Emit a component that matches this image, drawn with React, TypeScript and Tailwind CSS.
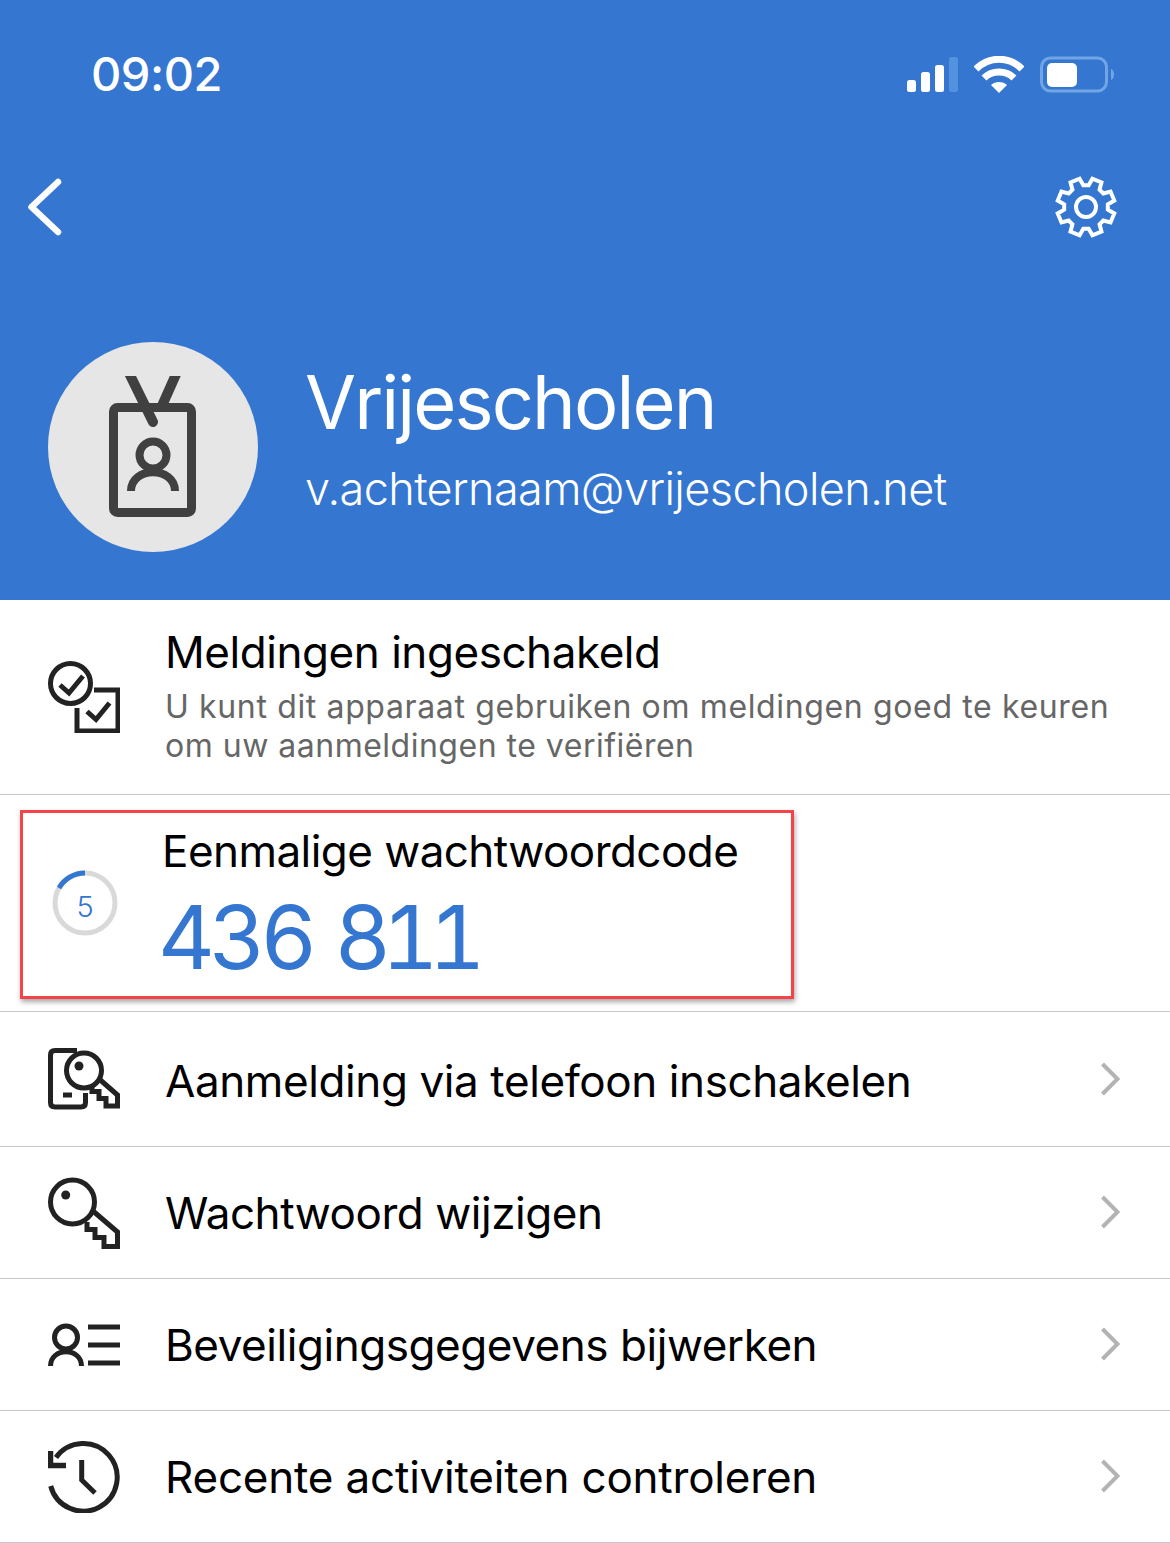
import React from "react";

const font = { fontFamily: "Inter, Roboto, 'Liberation Sans', sans-serif" };

function gearPath(cx: number, cy: number, R: number, r: number) {
  const pts: string[] = [];
  const n = 8;
  for (let i = 0; i < n; i++) {
    const a = (Math.PI * 2 * i) / n + Math.PI / 8 - Math.PI / 2;
    const w1 = 0.17;
    const w2 = 0.27;
    const list: [number, number][] = [
      [r, a - w2],
      [R, a - w1],
      [R, a + w1],
      [r, a + w2],
    ];
    for (const [rad, ang] of list) {
      pts.push(`${(cx + rad * Math.cos(ang)).toFixed(2)} ${(cy + rad * Math.sin(ang)).toFixed(2)}`);
    }
  }
  return "M" + pts.join("L") + "Z";
}

function Chevron() {
  return (
    <svg width="20" height="34" viewBox="0 0 20 34" fill="none" className="shrink-0">
      <path d="M2.5 2 L17.5 17 L2.5 32" stroke="#b3b3b3" strokeWidth="4" />
    </svg>
  );
}

function NavRow({ icon, label, h, text, chev }: { icon: React.ReactNode; label: string; h: string; text: string; chev: string }) {
  return (
    <div className={`flex items-center border-b border-[#c8c8c8] pl-[48px] pr-[50px] ${h}`}>
      <div className="w-[117px] shrink-0 flex items-center">{icon}</div>
      <div className={`flex-1 text-[44px] leading-[54px] text-black ${text}`}>{label}</div>
      <div className={chev}><Chevron /></div>
    </div>
  );
}

export default function App() {
  return (
    <div className="w-[1170px] h-[1543px] bg-white overflow-hidden" style={font}>
      <header className="h-[600px] bg-[#3476d0] text-white flex flex-col">
        <div className="flex items-center justify-between pl-[91px] pr-[54px] pt-[46px] h-[104px]">
          <span className="text-[47px] leading-[56px] font-medium tracking-[-0.5px] -mt-[2px]">09:02</span>
          <div className="flex items-center gap-[16px]">
            <svg width="52" height="36" viewBox="0 0 52 36">
              <rect x="1" y="23" width="9" height="12" rx="2.5" fill="#fff" />
              <rect x="15" y="15" width="9" height="20" rx="2.5" fill="#fff" />
              <rect x="29" y="8" width="9" height="27" rx="2.5" fill="#fff" />
              <rect x="43" y="0" width="9" height="35" rx="2.5" fill="#5393dd" />
            </svg>
            <svg width="50" height="38" viewBox="0 0 50 38">
              <path d="M2 13 C15 0 35 0 48 13" stroke="#fff" strokeWidth="7" fill="none" />
              <path d="M10 22 C18 14 32 14 40 22" stroke="#fff" strokeWidth="7" fill="none" />
              <path d="M17 29 C21 25 29 25 33 29 L25 37 Z" fill="#fff" />
            </svg>
            <svg width="76" height="38" viewBox="0 0 76 38">
              <rect x="1.5" y="2" width="65" height="33" rx="9" fill="none" stroke="#72a5e3" strokeWidth="3" />
              <rect x="7" y="7" width="30" height="24" rx="5" fill="#fff" />
              <path d="M71 13 C75 14 75 23 71 24 Z" fill="#72a5e3" />
            </svg>
          </div>
        </div>
        <div className="flex items-center justify-between pl-[28px] pr-[53px] mt-[70px] h-[66px]">
          <svg width="34" height="58" viewBox="0 0 34 58" fill="none">
            <path d="M30 4 L3.5 29 L30 54" stroke="#fff" strokeWidth="6.5" strokeLinecap="round" strokeLinejoin="round" />
          </svg>
          <svg width="62" height="62" viewBox="0 0 62 62" fill="none" stroke="#fff" strokeWidth="4">
            <path d={gearPath(31, 31, 29, 22)} strokeLinejoin="miter" />
            <circle cx="31" cy="31" r="10" />
          </svg>
        </div>
        <div className="flex items-center pl-[48px] mt-[102px]">
          <div className="w-[210px] h-[210px] rounded-full bg-[#e6e6e6] flex items-center justify-center shrink-0">
            <svg width="92" height="142" viewBox="0 0 92 142" fill="none" stroke="#404040" strokeWidth="8">
              <rect x="6.5" y="31.5" width="78" height="105" rx="4" strokeWidth="9" />
              <path d="M21.5 -4 L46 46" strokeLinecap="round" strokeWidth="10" />
              <path d="M70 -4 L54 32" strokeWidth="10" />
              <circle cx="46" cy="79" r="13.5" />
              <path d="M24 115 C24 90 68 90 68 115" />
            </svg>
          </div>
          <div className="ml-[47px] -mt-[21px]">
            <div className="text-[74px] leading-[90px] font-normal tracking-[-1.9px]">Vrijescholen</div>
            <div className="text-[45px] leading-[54px] mt-[15px] font-light tracking-[-0.6px]">v.achternaam@vrijescholen.net</div>
          </div>
        </div>
      </header>

      <div className="flex h-[195px] border-b border-[#c8c8c8] pl-[48px]">
        <div className="w-[117px] shrink-0 pt-[61px]">
          <svg width="72" height="72" viewBox="0 0 72 72" fill="none" stroke="#222" strokeWidth="5">
            <path d="M29 47 V70 H70 V29 H46" />
            <circle cx="22.5" cy="22.5" r="20" />
            <path d="M12 24 L21 32 L35 15" />
            <path d="M39 50.5 L48 58.5 L61.5 42" />
          </svg>
        </div>
        <div className="pt-[25px]">
          <div className="text-[44px] leading-[54px] text-black tracking-[-0.45px]">Meldingen ingeschakeld</div>
          <div className="text-[32px] leading-[39px] text-[#666] mt-[8px]">
            <div className="tracking-[0.64px]">U kunt dit apparaat gebruiken om meldingen goed te keuren</div>
            <div className="tracking-[0.5px]">om uw aanmeldingen te verifiëren</div>
          </div>
        </div>
      </div>

      <div className="h-[217px] border-b border-[#c8c8c8] pl-[20px] pt-[15px]">
        <div className="w-[774px] h-[189px] border-[3px] border-[#f4444a] shadow-[1px_3px_5px_rgba(0,0,0,0.35)] flex">
          <div className="w-[139px] shrink-0 pl-[29px] pt-[57px]">
            <div className="relative w-[66px] h-[66px]">
              <svg width="66" height="66" viewBox="0 0 66 66" fill="none" strokeWidth="5">
                <circle cx="33" cy="33" r="30" stroke="#d9d9d9" />
                <path d="M33 3 A30 30 0 0 0 7 18" stroke="#3476d0" />
              </svg>
              <span className="absolute inset-0 flex items-center justify-center text-[29px] font-light text-[#3476d0] pt-[7px]">5</span>
            </div>
          </div>
          <div>
            <div className="text-[44px] leading-[54px] text-black mt-[11px] tracking-[-0.55px]">Eenmalige wachtwoordcode</div>
            <div className="text-[88px] leading-[100px] font-normal tabular-nums text-[#3476d0] mt-[9px] -ml-[4px] tracking-[-5.5px]">
              <span className="tracking-[-6px]">436</span> <span className="ml-[5px] tracking-[-10px]">811</span>
            </div>
          </div>
        </div>
      </div>

      <NavRow
        h="h-[135px]"
        label="Aanmelding via telefoon inschakelen"
        text="pt-[4px] tracking-[-0.4px]"
        chev=""
        icon={
          <svg width="72" height="62" viewBox="0 0 72 62" fill="none" stroke="#222" strokeWidth="5">
            <path d="M29 2.5 H7 Q2.5 2.5 2.5 7 V54.5 Q2.5 59 7 59 H33 Q37.5 59 37.5 54.5 V45" />
            <path d="M15 47 H24" />
            <circle cx="36" cy="22.5" r="17.5" />
            <circle cx="31" cy="18" r="4.5" fill="#222" stroke="none" />
            <path d="M50 30 L69.5 47 V58 H58 V50.5 H51 V43.5 H44 V38" />
          </svg>
        }
      />
      <NavRow
        h="h-[132px]"
        label="Wachtwoord wijzigen"
        text="tracking-[-0.45px]"
        chev="pb-[2px]"
        icon={
          <svg width="72" height="72" viewBox="0 0 72 72" fill="none" stroke="#222" strokeWidth="5">
            <circle cx="24.5" cy="25" r="22" />
            <circle cx="17.7" cy="18" r="4.5" fill="#222" stroke="none" />
            <path d="M45 34 L69.5 55 V69.5 H56 V60.5 H47 V52.5 H39 V45" />
          </svg>
        }
      />
      <NavRow
        h="h-[132px]"
        label="Beveiligingsgegevens bijwerken"
        text="tracking-[-0.45px]"
        chev="pb-[2px]"
        icon={
          <svg width="72" height="43" viewBox="0 0 72 43" fill="none" stroke="#222" strokeWidth="5">
            <circle cx="18" cy="14.5" r="11.5" />
            <path d="M2.5 43 C2.5 24 33.5 24 33.5 43" />
            <path d="M40 4 H72 M40 22 H72 M40 40 H72" strokeWidth="5" />
          </svg>
        }
      />
      <NavRow
        h="h-[132px]"
        label="Recente activiteiten controleren"
        text="tracking-[-0.2px]"
        chev="pb-[2px]"
        icon={
          <svg width="72" height="72" viewBox="0 0 72 72" fill="none" stroke="#222" strokeWidth="5">
            <path d="M8 16.5 A33.8 33.8 0 1 1 2.7 45" />
            <path d="M2.5 10 V24.5 H18" strokeWidth="5.5" />
            <path d="M33.7 19 V39 L47 52" strokeWidth="5" />
          </svg>
        }
      />
    </div>
  );
}
